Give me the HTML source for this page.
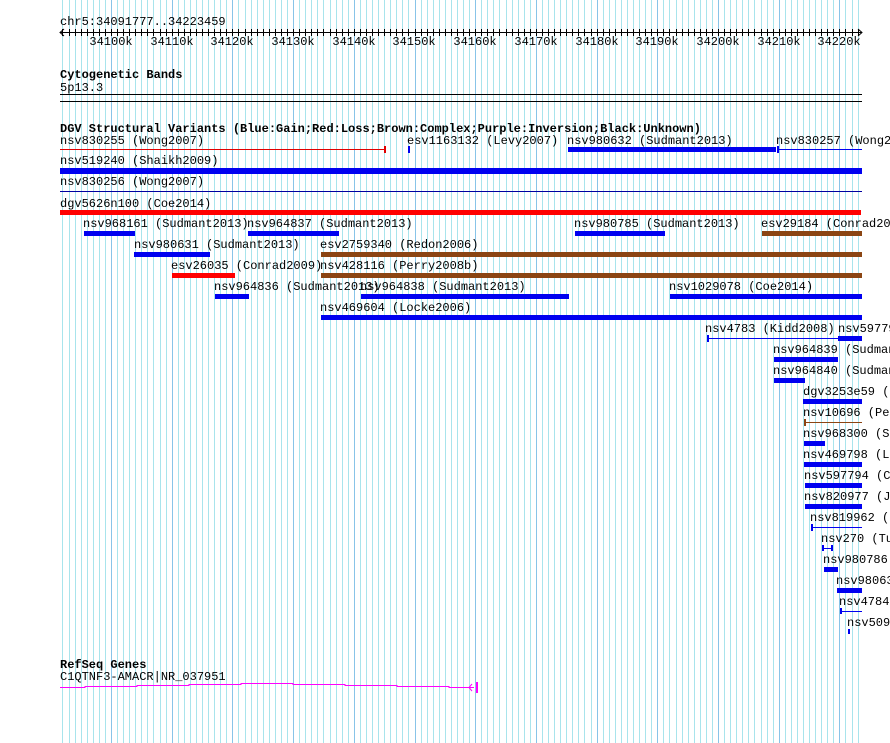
<!DOCTYPE html>
<html><head><meta charset="utf-8"><style>
html,body{margin:0;padding:0;background:#fff;width:890px;height:743px;overflow:hidden}
svg{display:block}
text{font-family:"Liberation Mono",monospace;font-size:12px;fill:#000}
.b{font-weight:bold}
</style></head><body>
<svg width="890" height="743" xmlns="http://www.w3.org/2000/svg" shape-rendering="crispEdges">
<defs>
<path id="g" fill="none" d="M62.5 0v743M69.5 0v743M75.5 0v743M81.5 0v743M87.5 0v743M93.5 0v743M99.5 0v743M105.5 0v743M111.5 0v743M117.5 0v743M123.5 0v743M129.5 0v743M135.5 0v743M141.5 0v743M147.5 0v743M153.5 0v743M160.5 0v743M166.5 0v743
M172.5 0v743M178.5 0v743M184.5 0v743M190.5 0v743M196.5 0v743M202.5 0v743M208.5 0v743M214.5 0v743M220.5 0v743M226.5 0v743
M232.5 0v743M238.5 0v743M245.5 0v743M251.5 0v743M257.5 0v743M263.5 0v743M269.5 0v743M275.5 0v743M281.5 0v743M287.5 0v743
M293.5 0v743M299.5 0v743M305.5 0v743M311.5 0v743M317.5 0v743M323.5 0v743M330.5 0v743M336.5 0v743M342.5 0v743M348.5 0v743
M354.5 0v743M360.5 0v743M366.5 0v743M372.5 0v743M378.5 0v743M384.5 0v743M390.5 0v743M396.5 0v743M402.5 0v743M408.5 0v743
M415.5 0v743M421.5 0v743M427.5 0v743M433.5 0v743M439.5 0v743M445.5 0v743M451.5 0v743M457.5 0v743M463.5 0v743M469.5 0v743
M475.5 0v743M481.5 0v743M487.5 0v743M493.5 0v743M499.5 0v743M506.5 0v743M512.5 0v743M518.5 0v743M524.5 0v743M530.5 0v743
M536.5 0v743M542.5 0v743M548.5 0v743M554.5 0v743M560.5 0v743M566.5 0v743M572.5 0v743M578.5 0v743M584.5 0v743M591.5 0v743
M597.5 0v743M603.5 0v743M609.5 0v743M615.5 0v743M621.5 0v743M627.5 0v743M633.5 0v743M639.5 0v743M645.5 0v743M651.5 0v743
M657.5 0v743M663.5 0v743M669.5 0v743M676.5 0v743M682.5 0v743M688.5 0v743M694.5 0v743M700.5 0v743M706.5 0v743M712.5 0v743
M718.5 0v743M724.5 0v743M730.5 0v743M736.5 0v743M742.5 0v743M748.5 0v743M754.5 0v743M761.5 0v743M767.5 0v743M773.5 0v743
M779.5 0v743M785.5 0v743M791.5 0v743M797.5 0v743M803.5 0v743M809.5 0v743M815.5 0v743M821.5 0v743M827.5 0v743M833.5 0v743
M839.5 0v743M845.5 0v743M852.5 0v743M858.5 0v743"/>
<clipPath id="c"><rect x="60" y="29" width="802" height="7"/></clipPath>
</defs>
<use href="#g" stroke="#a8e4ec" stroke-width="1"/>
<path stroke="#88c4e8" stroke-width="1" fill="none" d="M111.5 0v743M172.5 0v743M232.5 0v743M293.5 0v743M354.5 0v743M415.5 0v743M475.5 0v743M536.5 0v743M597.5 0v743M657.5 0v743M718.5 0v743M779.5 0v743M839.5 0v743"/>

<text x="60" y="25">chr5:34091777..34223459</text>
<rect x="60" y="32" width="802" height="1" fill="#000"/>
<use href="#g" stroke="#000" stroke-width="1" clip-path="url(#c)"/>
<path d="M64 29 L60 32.5 L64 36 M858 29 L862 32.5 L858 36" stroke="#000" fill="none" shape-rendering="auto"/>
<g text-anchor="middle">
<text x="111" y="45">34100k</text><text x="172" y="45">34110k</text><text x="232" y="45">34120k</text><text x="293" y="45">34130k</text><text x="354" y="45">34140k</text><text x="414" y="45">34150k</text><text x="475" y="45">34160k</text><text x="536" y="45">34170k</text><text x="597" y="45">34180k</text><text x="657" y="45">34190k</text><text x="718" y="45">34200k</text><text x="779" y="45">34210k</text><text x="839" y="45">34220k</text>
</g>

<text class="b" x="60" y="78">Cytogenetic Bands</text>
<text x="60" y="91">5p13.3</text>
<rect x="60" y="94" width="802" height="1" fill="#000"/>
<rect x="60" y="101" width="802" height="1" fill="#000"/>

<text class="b" x="60" y="132">DGV Structural Variants (Blue:Gain;Red:Loss;Brown:Complex;Purple:Inversion;Black:Unknown)</text>

<text x="60" y="144">nsv830255 (Wong2007)</text>
<rect x="60" y="149" width="325" height="1" fill="#e00000"/><rect x="384" y="146" width="2" height="7" fill="#e00000"/>
<text x="407" y="144">esv1163132 (Levy2007)</text>
<rect x="408" y="146" width="2" height="7" fill="#0000f0"/>
<text x="567" y="144">nsv980632 (Sudmant2013)</text>
<rect x="568" y="147" width="208" height="5" fill="#0000f0"/>
<text x="776" y="144">nsv830257 (Wong2007)</text>
<rect x="777" y="146" width="2" height="7" fill="#0000f0"/><rect x="777" y="149" width="85" height="1" fill="#0000f0"/>

<text x="60" y="164">nsv519240 (Shaikh2009)</text>
<rect x="60" y="168" width="802" height="6" fill="#0000f0"/>
<text x="60" y="185">nsv830256 (Wong2007)</text>
<rect x="60" y="191" width="802" height="1" fill="#0000a0"/>
<text x="60" y="207">dgv5626n100 (Coe2014)</text>
<rect x="60" y="210" width="801" height="5" fill="#ff0000"/>

<text x="83" y="227">nsv968161 (Sudmant2013)</text><rect x="84" y="231" width="51" height="5" fill="#0000f0"/>
<text x="247" y="227">nsv964837 (Sudmant2013)</text><rect x="248" y="231" width="91" height="5" fill="#0000f0"/>
<text x="574" y="227">nsv980785 (Sudmant2013)</text><rect x="575" y="231" width="90" height="5" fill="#0000f0"/>
<text x="761" y="227">esv29184 (Conrad2009)</text><rect x="762" y="231" width="100" height="5" fill="#8b4513"/>

<text x="134" y="248">nsv980631 (Sudmant2013)</text><rect x="134" y="252" width="76" height="5" fill="#0000f0"/>
<text x="320" y="248">esv2759340 (Redon2006)</text><rect x="321" y="252" width="541" height="5" fill="#8b4513"/>

<text x="171" y="269">esv26035 (Conrad2009)</text><rect x="172" y="273" width="63" height="5" fill="#ff0000"/>
<text x="320" y="269">nsv428116 (Perry2008b)</text><rect x="321" y="273" width="541" height="5" fill="#8b4513"/>

<text x="214" y="290">nsv964836 (Sudmant2013)</text><rect x="215" y="294" width="34" height="5" fill="#0000f0"/>
<text x="360" y="290">nsv964838 (Sudmant2013)</text><rect x="361" y="294" width="208" height="5" fill="#0000f0"/>
<text x="669" y="290">nsv1029078 (Coe2014)</text><rect x="670" y="294" width="192" height="5" fill="#0000f0"/>

<text x="320" y="311">nsv469604 (Locke2006)</text><rect x="321" y="315" width="541" height="5" fill="#0000f0"/>

<text x="705" y="332">nsv4783 (Kidd2008)</text>
<rect x="707" y="335" width="2" height="7" fill="#0000f0"/><rect x="707" y="338" width="131" height="1" fill="#0000f0"/>
<text x="838" y="332">nsv597795</text><rect x="838" y="336" width="24" height="5" fill="#0000f0"/>

<text x="773" y="353">nsv964839 (Sudmant2013)</text><rect x="774" y="357" width="64" height="5" fill="#0000f0"/>
<text x="773" y="374">nsv964840 (Sudmant2013)</text><rect x="774" y="378" width="31" height="5" fill="#0000f0"/>
<text x="803" y="395">dgv3253e59 (100</text><rect x="803" y="399" width="59" height="5" fill="#0000f0"/>
<text x="803" y="416">nsv10696 (Perry</text><rect x="804" y="419" width="2" height="7" fill="#8b4513"/><rect x="804" y="422" width="58" height="1" fill="#8b4513"/>
<text x="803" y="437">nsv968300 (Sudm</text><rect x="804" y="441" width="21" height="5" fill="#0000f0"/>
<text x="803" y="458">nsv469798 (Lock</text><rect x="804" y="462" width="58" height="5" fill="#0000f0"/>
<text x="804" y="479">nsv597794 (Coop</text><rect x="805" y="483" width="57" height="5" fill="#0000f0"/>
<text x="804" y="500">nsv820977 (Ju20</text><rect x="805" y="504" width="57" height="5" fill="#0000f0"/>
<text x="810" y="521">nsv819962 (Kin</text><rect x="811" y="524" width="2" height="7" fill="#0000f0"/><rect x="811" y="527" width="51" height="1" fill="#0000f0"/>
<text x="821" y="542">nsv270 (Tuzu</text><rect x="822" y="545" width="2" height="6" fill="#0000f0"/><rect x="831" y="545" width="2" height="6" fill="#0000f0"/><rect x="822" y="548" width="10" height="1" fill="#0000f0"/>
<text x="823" y="563">nsv980786 (</text><rect x="824" y="567" width="14" height="5" fill="#0000f0"/>
<text x="836" y="584">nsv980633</text><rect x="837" y="588" width="25" height="5" fill="#0000f0"/>
<text x="839" y="605">nsv4784 (</text><rect x="840" y="608" width="2" height="6" fill="#0000f0"/><rect x="840" y="611" width="22" height="1" fill="#0000f0"/>
<text x="847" y="626">nsv5090</text><rect x="848" y="629" width="2" height="5" fill="#0000f0"/>

<text class="b" x="60" y="668">RefSeq Genes</text>
<text x="60" y="680">C1QTNF3-AMACR|NR_037951</text>
<path d="M60 687.5 H85 V686.5 H137 V685.5 H189 V684.5 H241 V683.5 H293 V684.5 H345 V685.5 H397 V686.5 H449 V687.5 H474" stroke="#ff00ff" stroke-width="1" fill="none"/>
<path d="M472 684 L469 687.5 L472 691" stroke="#ff00ff" fill="none" shape-rendering="auto"/>
<rect x="476" y="682" width="2" height="11" fill="#ff00ff"/>
</svg>
</body></html>
